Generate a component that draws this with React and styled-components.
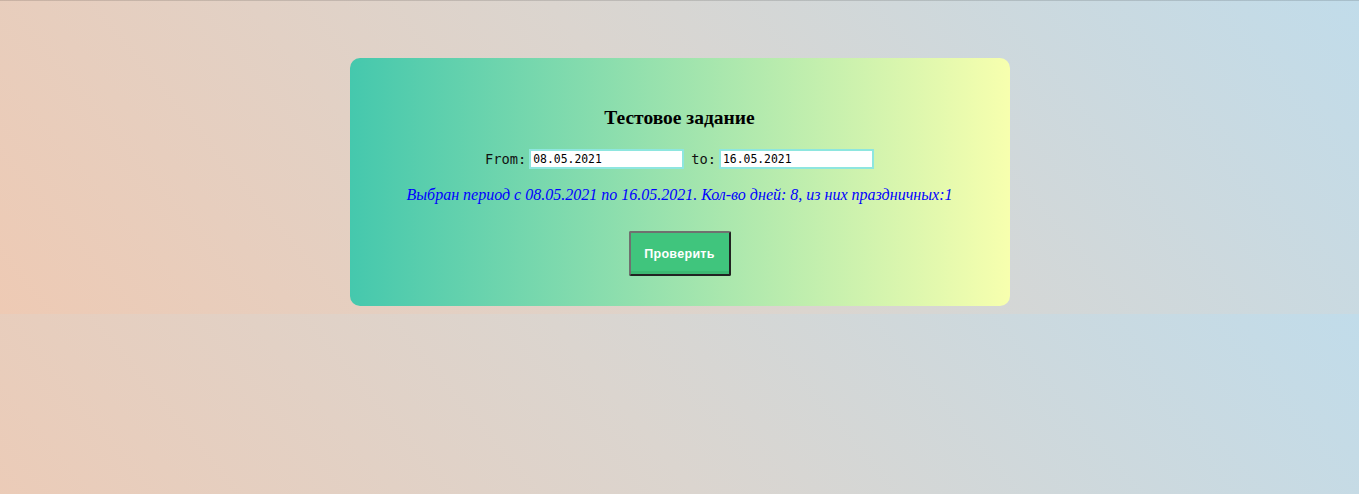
import React, { useState } from 'react';
import styled, { createGlobalStyle } from 'styled-components';

const GlobalStyle = createGlobalStyle`
  html {
    background: linear-gradient(50deg, #eecab4 0%, #dbd5cf 50%, #c1dcea 100%) 0 0 / 100% 314px repeat;
    min-height: 100%;
  }
  body {
    margin: 0;
    border-top: 1px solid rgba(0, 0, 0, 0.13);
    font-family: 'Liberation Serif', serif;
  }
`;

const Page = styled.div`
  display: flex;
  justify-content: center;
  padding-top: 57px;
`;

const Card = styled.div`
  width: 660px;
  height: 248px;
  box-sizing: border-box;
  border-radius: 10px;
  background: linear-gradient(to right, #45c8ad, #f7ffae);
  display: flex;
  flex-direction: column;
  align-items: center;
  padding-top: 49px;
`;

const Title = styled.h3`
  margin: 0;
  font-family: 'Liberation Serif', serif;
  font-size: 19.5px;
  font-weight: bold;
  color: #000;
  line-height: 22px;
`;

const Row = styled.div`
  display: flex;
  align-items: center;
  margin-top: 20px;
  gap: 3px;
`;

const Label = styled.label`
  font-family: 'DejaVu Sans Mono', monospace;
  font-size: 13.7px;
  color: #111;
  margin-left: ${(p) => (p.$gap ? '4px' : '0')};
`;

const DateInput = styled.input`
  width: 155px;
  height: 20px;
  box-sizing: border-box;
  border: 2px solid #8ee6df;
  background: #fff;
  padding: 0 2px;
  font-family: 'DejaVu Sans Mono', monospace;
  font-size: 11.4px;
  color: #000;
  outline: none;
`;

const Result = styled.p`
  margin: 17px 0 0;
  font-family: 'Liberation Serif', serif;
  font-style: italic;
  font-size: 16px;
  color: #0000ff;
  line-height: 18px;
`;

const Button = styled.button`
  margin-top: 27px;
  width: 102px;
  height: 45px;
  box-sizing: border-box;
  background: #40c57d;
  border-style: solid;
  border-width: 2px;
  border-color: #6f716f #222 #222 #6f716f;
  border-radius: 2px;
  box-shadow: inset 0 -3px 0 #3bb872;
  color: #fff;
  font-family: 'Liberation Sans', Arial, sans-serif;
  font-size: 12.5px;
  font-weight: bold;
  letter-spacing: 0.3px;
  cursor: pointer;
`;

export default function App() {
  const [from, setFrom] = useState('08.05.2021');
  const [to, setTo] = useState('16.05.2021');
  return (
    <>
      <GlobalStyle />
      <Page>
        <Card>
          <Title>Тестовое задание</Title>
          <Row>
            <Label>From:</Label>
            <DateInput value={from} onChange={(e) => setFrom(e.target.value)} />
            <Label $gap>to:</Label>
            <DateInput value={to} onChange={(e) => setTo(e.target.value)} />
          </Row>
          <Result>
            Выбран период с {from} по {to}. Кол-во дней: 8, из них праздничных:1
          </Result>
          <Button>Проверить</Button>
        </Card>
      </Page>
    </>
  );
}
